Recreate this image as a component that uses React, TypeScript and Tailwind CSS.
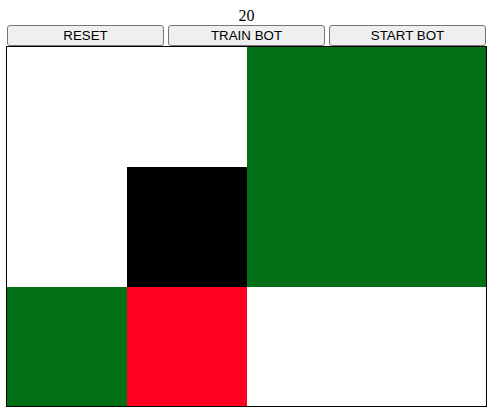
import React from "react";

const G = "bg-[#047016]";
const cells: string[] = [
  "bg-white", "bg-white", G, G,
  "bg-white", "bg-black", G, G,
  G, "bg-[#ff0020]", "bg-white", "bg-white",
];

export default function App() {
  return (
    <div className="w-[493px] h-[413px] bg-white">
      <div className="h-[25px] pt-[7px] text-center text-[16px] leading-[18px] text-black" style={{ fontFamily: "'Liberation Serif', 'DejaVu Serif', serif" }}>
        20
      </div>
      <div className="flex gap-[4px] pl-[7px] h-[21px]">
        {["RESET", "TRAIN BOT", "START BOT"].map((t) => (
          <button
            key={t}
            className="w-[157px] h-[21px] bg-[#efefef] border border-[#767676] rounded-[3px] text-[13.33px] leading-[15px] text-black flex items-center justify-center font-['Liberation_Sans',Arial,sans-serif]"
          >
            {t}
          </button>
        ))}
      </div>
      <div className="ml-[6px] w-[481px] h-[361px] border border-black overflow-hidden">
        <div className="grid grid-cols-[120px_120px_120px_120px] grid-rows-[120px_120px_120px] w-[480px]">
          {cells.map((c, i) => (
            <div key={i} className={c} />
          ))}
        </div>
      </div>
    </div>
  );
}
